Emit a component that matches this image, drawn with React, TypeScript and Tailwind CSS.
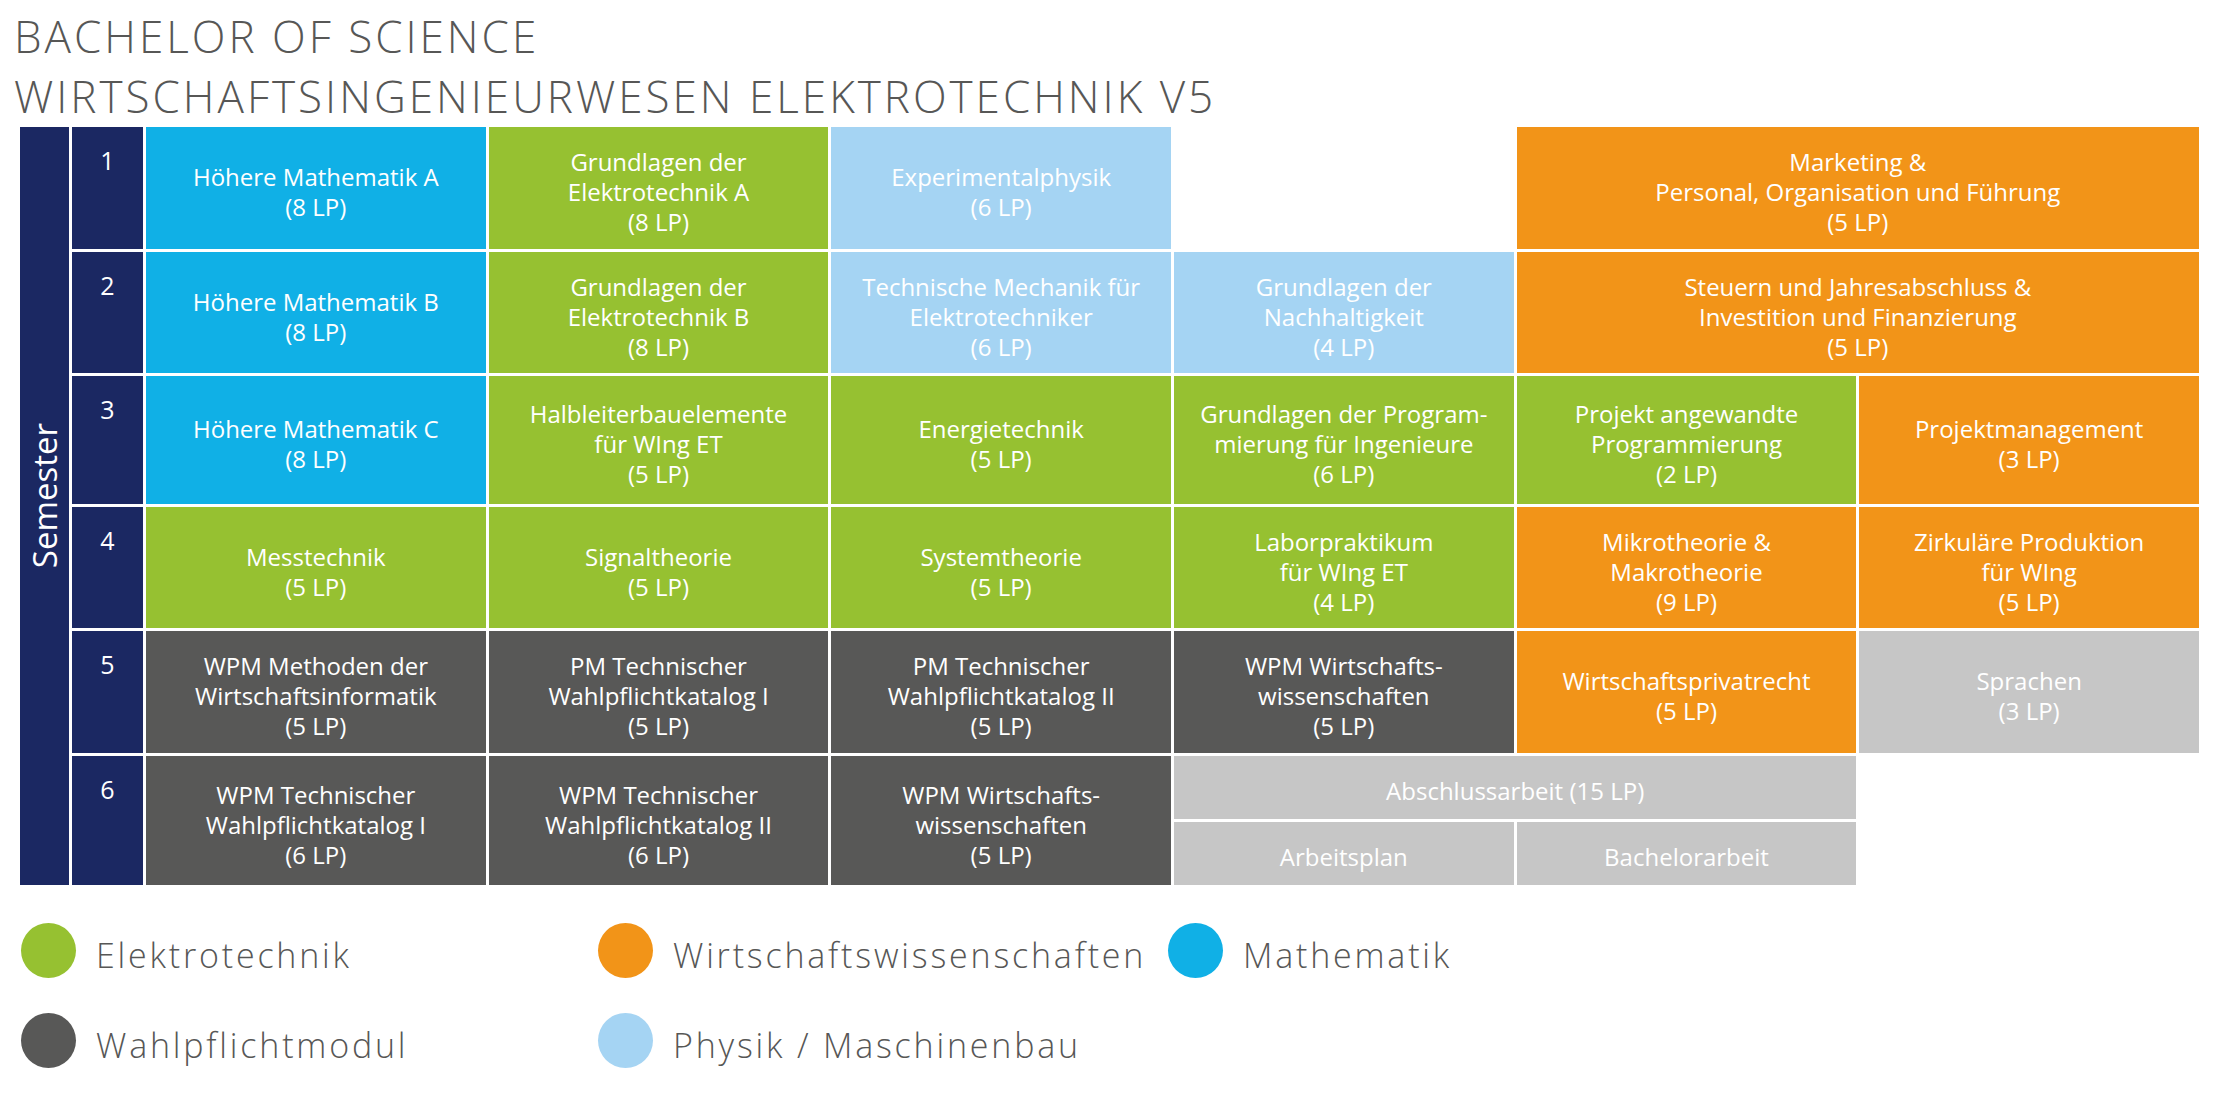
import React from "react";

const C = {
  blue: "bg-[#10b0e6]",
  green: "bg-[#96c131]",
  light: "bg-[#a5d4f3]",
  orange: "bg-[#f29418]",
  dark: "bg-[#585857]",
  gray: "bg-[#c6c6c6]",
};

type CellProps = { bg?: string; lines?: string[]; span?: boolean };

function Cell({ bg, lines, span }: CellProps) {
  if (!bg) return <div className={span ? "col-span-2" : ""} />;
  return (
    <div
      className={`${bg} ${span ? "col-span-2" : ""} flex flex-col items-center justify-center text-center text-white text-[24px] leading-[30px] pt-[8px]`}
    >
      {lines?.map((l, i) => (
        <div key={i} className="whitespace-nowrap">
          {l}
        </div>
      ))}
    </div>
  );
}

function Num({ n }: { n: number }) {
  return (
    <div className="bg-[#1b2862] text-white text-[25px] leading-[30px] pt-[18px] text-center">
      {n}
    </div>
  );
}

function Legend({ color, label }: { color: string; label: string }) {
  return (
    <div className="flex items-center gap-[20px]">
      <div className={`${color} w-[55px] h-[55px] rounded-full shrink-0`} />
      <div className="text-[34px] leading-[46px] tracking-[2.8px] font-light text-[#575756] mt-[8px] whitespace-nowrap">
        {label}
      </div>
    </div>
  );
}

export default function App() {
  return (
    <div
      className="w-[2219px] h-[1101px] bg-white overflow-hidden"
      style={{ fontFamily: '"Open Sans", "Noto Sans", sans-serif' }}
    >
      <div className="pl-[14px] pt-[6px] text-[44px] leading-[60px] tracking-[3px] font-light text-[#575756]">
        <div>BACHELOR OF SCIENCE</div>
        <div>WIRTSCHAFTSINGENIEURWESEN ELEKTROTECHNIK V5</div>
      </div>

      <div className="ml-[20px] mt-[1px] w-[2179px] grid grid-cols-[49px_71px_repeat(6,minmax(0,1fr))] grid-rows-[122px_121px_128px_121px_122px_129px] gap-[3px]">
        <div className="row-span-6 bg-[#1b2862] flex items-center justify-center pb-[20px]">
          <div className="text-white text-[33px] leading-[44px] [writing-mode:vertical-rl] rotate-180 whitespace-nowrap">
            Semester
          </div>
        </div>

        {/* Row 1 */}
        <Num n={1} />
        <Cell bg={C.blue} lines={["Höhere Mathematik A", "(8 LP)"]} />
        <Cell bg={C.green} lines={["Grundlagen der", "Elektrotechnik A", "(8 LP)"]} />
        <Cell bg={C.light} lines={["Experimentalphysik", "(6 LP)"]} />
        <Cell />
        <Cell
          bg={C.orange}
          span
          lines={["Marketing &", "Personal, Organisation und Führung", "(5 LP)"]}
        />

        {/* Row 2 */}
        <Num n={2} />
        <Cell bg={C.blue} lines={["Höhere Mathematik B", "(8 LP)"]} />
        <Cell bg={C.green} lines={["Grundlagen der", "Elektrotechnik B", "(8 LP)"]} />
        <Cell bg={C.light} lines={["Technische Mechanik für", "Elektrotechniker", "(6 LP)"]} />
        <Cell bg={C.light} lines={["Grundlagen der", "Nachhaltigkeit", "(4 LP)"]} />
        <Cell
          bg={C.orange}
          span
          lines={["Steuern und Jahresabschluss &", "Investition und Finanzierung", "(5 LP)"]}
        />

        {/* Row 3 */}
        <Num n={3} />
        <Cell bg={C.blue} lines={["Höhere Mathematik C", "(8 LP)"]} />
        <Cell bg={C.green} lines={["Halbleiterbauelemente", "für WIng ET", "(5 LP)"]} />
        <Cell bg={C.green} lines={["Energietechnik", "(5 LP)"]} />
        <Cell bg={C.green} lines={["Grundlagen der Program-", "mierung für Ingenieure", "(6 LP)"]} />
        <Cell bg={C.green} lines={["Projekt angewandte", "Programmierung", "(2 LP)"]} />
        <Cell bg={C.orange} lines={["Projektmanagement", "(3 LP)"]} />

        {/* Row 4 */}
        <Num n={4} />
        <Cell bg={C.green} lines={["Messtechnik", "(5 LP)"]} />
        <Cell bg={C.green} lines={["Signaltheorie", "(5 LP)"]} />
        <Cell bg={C.green} lines={["Systemtheorie", "(5 LP)"]} />
        <Cell bg={C.green} lines={["Laborpraktikum", "für WIng ET", "(4 LP)"]} />
        <Cell bg={C.orange} lines={["Mikrotheorie &", "Makrotheorie", "(9 LP)"]} />
        <Cell bg={C.orange} lines={["Zirkuläre Produktion", "für WIng", "(5 LP)"]} />

        {/* Row 5 */}
        <Num n={5} />
        <Cell bg={C.dark} lines={["WPM Methoden der", "Wirtschaftsinformatik", "(5 LP)"]} />
        <Cell bg={C.dark} lines={["PM Technischer", "Wahlpflichtkatalog I", "(5 LP)"]} />
        <Cell bg={C.dark} lines={["PM Technischer", "Wahlpflichtkatalog II", "(5 LP)"]} />
        <Cell bg={C.dark} lines={["WPM Wirtschafts-", "wissenschaften", "(5 LP)"]} />
        <Cell bg={C.orange} lines={["Wirtschaftsprivatrecht", "(5 LP)"]} />
        <Cell bg={C.gray} lines={["Sprachen", "(3 LP)"]} />

        {/* Row 6 */}
        <Num n={6} />
        <Cell bg={C.dark} lines={["WPM Technischer", "Wahlpflichtkatalog I", "(6 LP)"]} />
        <Cell bg={C.dark} lines={["WPM Technischer", "Wahlpflichtkatalog II", "(6 LP)"]} />
        <Cell bg={C.dark} lines={["WPM Wirtschafts-", "wissenschaften", "(5 LP)"]} />
        <div className="col-span-2 grid grid-cols-2 grid-rows-2 gap-[3px]">
          <div className="col-span-2 bg-[#c6c6c6] flex items-center justify-center text-white text-[24px] leading-[30px] pt-[6px]">
            Abschlussarbeit (15 LP)
          </div>
          <div className="bg-[#c6c6c6] flex items-center justify-center text-white text-[24px] leading-[30px] pt-[6px]">
            Arbeitsplan
          </div>
          <div className="bg-[#c6c6c6] flex items-center justify-center text-white text-[24px] leading-[30px] pt-[6px]">
            Bachelorarbeit
          </div>
        </div>
        <div />
      </div>

      <div className="ml-[21px] mt-[38px] grid grid-cols-[577px_570px_auto] gap-y-[35px]">
        <Legend color="bg-[#96c131]" label="Elektrotechnik" />
        <Legend color="bg-[#f29418]" label="Wirtschaftswissenschaften" />
        <Legend color="bg-[#10b0e6]" label="Mathematik" />
        <Legend color="bg-[#585857]" label="Wahlpflichtmodul" />
        <Legend color="bg-[#a5d4f3]" label="Physik / Maschinenbau" />
      </div>
    </div>
  );
}
